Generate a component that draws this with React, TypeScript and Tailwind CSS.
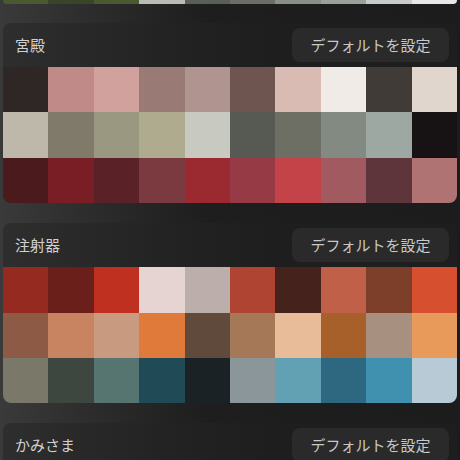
const prev = ['#4a5a30', '#3a4428', '#4a5a30', '#b8bcb4', '#5a6058', '#6a6e66', '#8a8e88', '#9aa09a', '#c8ccc8', '#e8e8e8'];

const palettes = [
  {
    name: '宮殿',
    colors: [
      '#2e2726', '#c08a88', '#d0a19d', '#9a7a75', '#b09490', '#6e5550', '#d9bbb4', '#f0ebe7', '#403b37', '#e0d6ce',
      '#bdb8aa', '#7f7a6a', '#9a9880', '#aeab8e', '#c8c9c0', '#575a52', '#6d6f64', '#838a82', '#9ea8a2', '#171213',
      '#4a1a1c', '#7a1e26', '#5a2227', '#7a3a40', '#9b2a30', '#963a45', '#c44348', '#a05a60', '#5e353a', '#b07374',
    ],
  },
  {
    name: '注射器',
    colors: [
      '#942a20', '#6a1f1a', '#c03020', '#e6d4d2', '#bbaeab', '#b04432', '#45221c', '#c06048', '#7d3e2a', '#d65030',
      '#8c5a45', '#c88460', '#c89a80', '#e07a3a', '#604a3c', '#a57858', '#e8bc98', '#a8602a', '#a89080', '#e89a5a',
      '#7a7868', '#3e4640', '#567470', '#204a55', '#1a2226', '#8a969a', '#62a0b4', '#2e6880', '#4090b0', '#b8cad6',
    ],
  },
  { name: 'かみさま', colors: [] as string[] },
];

function Card({ name, colors }: { name: string; colors: string[] }) {
  return (
    <div className="rounded-lg overflow-hidden bg-[linear-gradient(90deg,#2e2e2e_0%,#232323_35%,#1e1e1e_60%)]">
      <div className="h-[44px] flex items-center justify-between pl-3 pr-2">
        <span className="text-[15px] text-[#d0d0d0]">{name}</span>
        <button className="h-[34px] w-[157px] rounded-lg bg-[#2a2a2a] text-[15px] text-[#c8c8c8]">
          デフォルトを設定
        </button>
      </div>
      {colors.length > 0 && (
        <div className="grid grid-cols-10">
          {colors.map((c, i) => (
            <div key={i} className="aspect-square" style={{ background: c }} />
          ))}
        </div>
      )}
    </div>
  );
}

export default function App() {
  return (
    <div
      className="w-[460px] h-[460px] overflow-hidden px-[3px] bg-[linear-gradient(90deg,#3a3a3a_0%,#2c2c2c_20%,#1e1e1e_45%,#1c1c1c_100%)]"
      style={{ fontFamily: '"Noto Sans CJK JP", "Noto Sans", sans-serif' }}
    >
      <div className="grid grid-cols-10 h-[4px] rounded-b-md overflow-hidden">
        {prev.map((c, i) => (
          <div key={i} style={{ background: c }} />
        ))}
      </div>
      <div className="flex flex-col gap-[20px] pt-[19px]">
        {palettes.map((p) => (
          <Card key={p.name} name={p.name} colors={p.colors} />
        ))}
      </div>
    </div>
  );
}
